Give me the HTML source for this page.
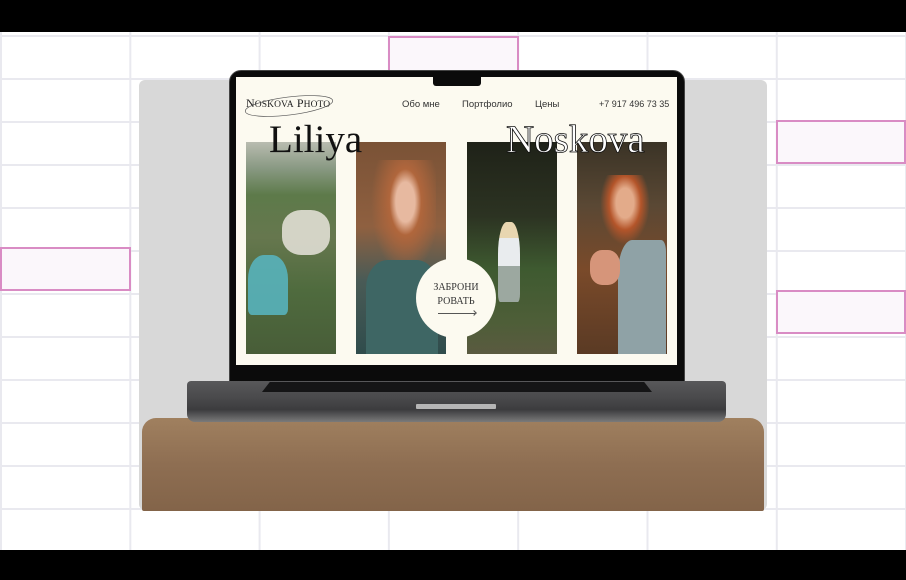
<!DOCTYPE html>
<html><head><meta charset="utf-8"><style>
*{margin:0;padding:0;box-sizing:border-box}
body{width:906px;height:580px;overflow:hidden;background:#fff;position:relative;font-family:"Liberation Sans",sans-serif}
.a{position:absolute}
.grid{left:0;top:32px;width:906px;height:518px;
background-image:linear-gradient(#e9e9ef 2px,transparent 2px),linear-gradient(90deg,#e9e9ef 2px,transparent 2px);
background-size:129.3px 43px;background-position:0 3px,0 0}
.pk{border:2px solid #d98cc4;background:#fbf7fb}
.ph{top:142px;height:212px;width:90px}
</style></head><body>
<div class="a" style="left:0;top:0;width:906px;height:32px;background:#000"></div>
<div class="a grid"></div>
<div class="a pk" style="left:388px;top:36px;width:131px;height:36px"></div>
<div class="a pk" style="left:776px;top:120px;width:130px;height:44px"></div>
<div class="a pk" style="left:0;top:247px;width:131px;height:44px"></div>
<div class="a pk" style="left:776px;top:290px;width:130px;height:44px"></div>
<div class="a" style="left:0;top:550px;width:906px;height:30px;background:#000"></div>
<div class="a" style="left:139px;top:80px;width:628px;height:430px;background:#d8d8d8;border-radius:6px"></div>
<div class="a" style="left:142px;top:418px;width:622px;height:93px;border-radius:14px 14px 2px 2px;background:linear-gradient(180deg,#a0805f,#8e6e52 50%,#836449);"></div>
<!-- lid -->
<div class="a" style="left:229px;top:70px;width:456px;height:312px;background:#0b0b0b;border-radius:12px 12px 0 0;border:1px solid #444"></div>
<div class="a" style="left:236px;top:77px;width:441px;height:288px;background:#fcfaf0"></div>
<div class="a" style="left:433px;top:77px;width:48px;height:9px;background:#0b0b0b;border-radius:0 0 3px 3px"></div>
<!-- base -->
<div class="a" style="left:187px;top:381px;width:539px;height:41px;background:linear-gradient(180deg,#58585a,#4a4a4c 40%,#3c3c3e 70%,#7a7a7a);border-radius:4px 4px 8px 8px"></div>
<div class="a" style="left:262px;top:382px;width:390px;height:10px;background:#151516;clip-path:polygon(2% 0,98% 0,100% 100%,0 100%)"></div>
<div class="a" style="left:416px;top:404px;width:80px;height:5px;background:#b5b5b5;border-radius:1px"></div>
<!-- header -->
<div class="a" style="left:246px;top:96px;font-family:'Liberation Serif',serif;font-size:12px;color:#222;letter-spacing:0.1px">N<span style="font-size:9.5px">OSKOVA</span> P<span style="font-size:9.5px">HOTO</span></div>
<svg class="a" style="left:244px;top:92px" width="92" height="28"><ellipse cx="45" cy="14" rx="44" ry="9" transform="rotate(-7 45 14)" fill="none" stroke="#555" stroke-width="0.7"/></svg>
<div class="a" style="left:402px;top:99px;font-size:9.5px;color:#333">Обо мне</div>
<div class="a" style="left:462px;top:99px;font-size:9.5px;color:#333">Портфолио</div>
<div class="a" style="left:535px;top:99px;font-size:9.5px;color:#333">Цены</div>
<div class="a" style="left:599px;top:99px;font-size:9px;color:#333">+7 917 496 73 35</div>
<!-- photos -->
<div class="a ph" style="left:246px;background:linear-gradient(180deg,#b9bcb0 0,#8a9a84 12%,#5d7a4a 25%,#66774e 45%,#4f6b3e 70%,#485d38 100%)"></div>
<div class="a" style="left:248px;top:255px;width:40px;height:60px;background:#58b3bb;border-radius:40% 40% 10% 10%;opacity:.9"></div>
<div class="a" style="left:282px;top:210px;width:48px;height:45px;background:#e8e4dc;border-radius:40%;opacity:.85"></div>
<div class="a ph" style="left:356px;background:linear-gradient(180deg,#7a5236,#8f6040 40%,#4a5b56 65%,#2f4c4c)"></div>
<div class="a" style="left:368px;top:160px;width:68px;height:120px;background:radial-gradient(ellipse at 55% 35%,#e7b9a0 0 18%,#b0663c 30%,transparent 65%)"></div>
<div class="a" style="left:366px;top:260px;width:72px;height:94px;background:#3e6664;border-radius:30% 30% 0 0"></div>
<div class="a ph" style="left:467px;background:linear-gradient(180deg,#1f2218,#2c3322 35%,#3e5a30 60%,#4e5e38 85%,#5a5a40)"></div>
<div class="a" style="left:498px;top:222px;width:22px;height:80px;background:linear-gradient(180deg,#e8d6b0 0 20%,#e9ecee 20% 55%,#9ca8a0 55%);border-radius:40% 40% 10% 10%"></div>
<div class="a ph" style="left:577px;background:linear-gradient(180deg,#3a3326,#5a4834 30%,#7a4a2a 60%,#5a3a24)"></div>
<div class="a" style="left:600px;top:175px;width:50px;height:70px;background:radial-gradient(ellipse at 50% 40%,#e3ab8a 0 25%,#b4552a 45%,transparent 70%)"></div>
<div class="a" style="left:618px;top:240px;width:48px;height:114px;background:#8fa2a6;border-radius:30% 10% 0 0"></div>
<div class="a" style="left:590px;top:250px;width:30px;height:35px;background:#d6957a;border-radius:40%"></div>
<!-- titles -->
<div class="a" style="left:269px;top:120px;font-family:'Liberation Serif',serif;font-size:39px;color:#111;line-height:1">Liliya</div>
<div class="a" style="left:506px;top:120px;font-family:'Liberation Serif',serif;font-size:39px;color:#fff;line-height:1;-webkit-text-stroke:0.8px #111">Noskova</div>
<!-- circle -->
<div class="a" style="left:416px;top:258px;width:80px;height:80px;border-radius:50%;background:#fcfaf0"></div>
<div class="a" style="left:416px;top:281px;width:80px;text-align:center;font-family:'Liberation Serif',serif;font-size:10px;line-height:14px;color:#333">ЗАБРОНИ<br>РОВАТЬ</div>
<div class="a" style="left:438px;top:313px;width:37px;height:1px;background:#555"></div>
<div class="a" style="left:472px;top:311px;width:4px;height:4px;border-top:1px solid #555;border-right:1px solid #555;transform:rotate(45deg)"></div>
</body></html>
